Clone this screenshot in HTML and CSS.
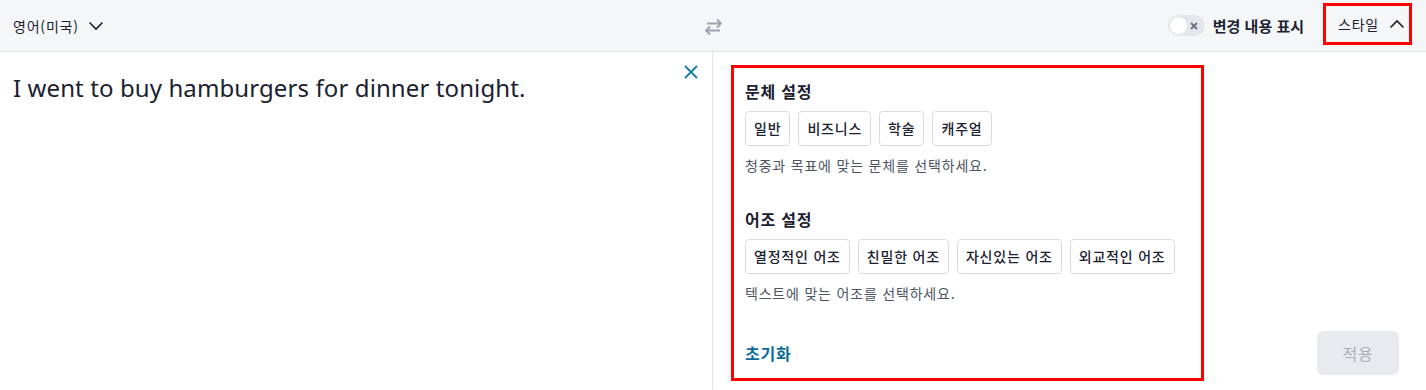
FILE: index.html
```html
<!DOCTYPE html>
<html lang="ko">
<head>
  <meta charset="UTF-8">
  <meta name="viewport" content="width=device-width, initial-scale=1.0">
  <title>글쓰기 스타일</title>
  <link rel="stylesheet" href="styles.css">
</head>
<body>
  <div class="app">
    <header class="toolbar">
      <div class="toolbar-left">
        <button class="lang-select">
          <span>영어(미국)</span>
          <svg width="16" height="16" viewBox="0 0 16 16"><polyline points="1.5,4.5 8,11 14.5,4.5" fill="none" stroke="currentColor" stroke-width="1.6"/></svg>
        </button>
      </div>
      <button class="swap" aria-label="swap">
        <svg width="19" height="17" viewBox="0 0 19 17">
          <path d="M3 5.5H17M13 1.5L17 5.5L13 9.5" fill="none" stroke="currentColor" stroke-width="1.8"/>
          <path d="M16 12.5H2M6 8.5L2 12.5L6 16.5" fill="none" stroke="currentColor" stroke-width="1.8"/>
        </svg>
      </button>
      <div class="toolbar-right">
        <label class="toggle">
          <span class="switch">
            <span class="knob"></span>
            <svg width="8" height="8" viewBox="0 0 8 8"><path d="M1 1L7 7M7 1L1 7" stroke="currentColor" stroke-width="1.8"/></svg>
          </span>
          <span class="toggle-label">변경 내용 표시</span>
        </label>
        <button class="style-btn">
          <span>스타일</span>
          <svg width="16" height="16" viewBox="0 0 16 16"><polyline points="1.5,11.5 8,5 14.5,11.5" fill="none" stroke="currentColor" stroke-width="1.6"/></svg>
        </button>
      </div>
    </header>

    <main class="panes">
      <section class="source">
        <p class="source-text">I went to buy hamburgers for dinner tonight.</p>
        <button class="clear" aria-label="clear">
          <svg width="14" height="14" viewBox="0 0 14 14"><path d="M1 1L13 13M13 1L1 13" stroke="currentColor" stroke-width="1.9"/></svg>
        </button>
      </section>

      <section class="style-pane">
        <div class="style-panel">
          <h3>문체 설정</h3>
          <div class="chips">
            <button class="chip">일반</button>
            <button class="chip">비즈니스</button>
            <button class="chip">학술</button>
            <button class="chip">캐주얼</button>
          </div>
          <p class="hint">청중과 목표에 맞는 문체를 선택하세요.</p>

          <h3 class="second">어조 설정</h3>
          <div class="chips">
            <button class="chip">열정적인 어조</button>
            <button class="chip">친밀한 어조</button>
            <button class="chip">자신있는 어조</button>
            <button class="chip">외교적인 어조</button>
          </div>
          <p class="hint">텍스트에 맞는 어조를 선택하세요.</p>

          <button class="reset">초기화</button>
        </div>
        <button class="apply" disabled>적용</button>
      </section>
    </main>
  </div>
</body>
</html>
```

FILE: styles.css
```css
:root {
  --text: #1b2130;
  --muted: #4d5562;
  --line: #e1e4e8;
  --chip-border: #d8dce2;
  --link: #0b6c9c;
  --annot: #ff0000;
  --ko-track: 0.8px;
}

* {
  box-sizing: border-box;
}

body {
  margin: 0;
  font-family: "Noto Sans", "Noto Sans CJK KR", sans-serif;
  color: var(--text);
  background: #ffffff;
}

button {
  font-family: inherit;
  color: inherit;
  background: none;
  border: none;
  padding: 0;
  cursor: pointer;
  white-space: nowrap;
}

.app {
  height: 390px;
  display: flex;
  flex-direction: column;
  overflow: hidden;
}

/* Toolbar */
.toolbar {
  height: 52px;
  flex-shrink: 0;
  display: grid;
  grid-template-columns: 1fr auto 1fr;
  align-items: center;
  background: #f5f6f8;
  border-bottom: 1px solid var(--line);
}

.toolbar-left {
  padding-left: 13px;
}

.lang-select {
  display: flex;
  align-items: center;
  gap: 9px;
  font-family: "Noto Sans CJK KR", sans-serif;
  font-size: 14px;
  line-height: 20px;
  letter-spacing: var(--ko-track);
  color: var(--text);
}

.swap {
  display: flex;
  color: #9ca3af;
  margin-top: 1px;
}

.toolbar-right {
  display: flex;
  align-items: center;
  justify-content: flex-end;
  padding-right: 14px;
}

.toggle {
  display: flex;
  align-items: center;
  gap: 8px;
  margin-right: 19px;
}

.switch {
  width: 37px;
  height: 21px;
  border-radius: 11px;
  background: #e3e6ea;
  display: flex;
  align-items: center;
  justify-content: space-between;
  padding: 0 7px 0 2px;
  color: #6b7280;
}

.knob {
  width: 17px;
  height: 17px;
  border-radius: 50%;
  background: #ffffff;
}

.toggle-label {
  font-family: "Noto Sans CJK KR", sans-serif;
  font-size: 15px;
  font-weight: 700;
  line-height: 20px;
}

.style-btn {
  display: flex;
  align-items: center;
  gap: 10px;
  height: 42px;
  width: 89px;
  margin-bottom: 3px;
  padding: 0 2px 0 12px;
  border: 3px solid var(--annot);
  font-family: "Noto Sans CJK KR", sans-serif;
  font-size: 14px;
  line-height: 20px;
  letter-spacing: var(--ko-track);
}

.style-btn svg {
  flex-shrink: 0;
}

/* Panes */
.panes {
  flex: 1;
  display: flex;
  min-height: 0;
}

.source {
  width: 713px;
  flex-shrink: 0;
  display: flex;
  align-items: flex-start;
  justify-content: space-between;
  padding: 13px 14px 0 13px;
  border-right: 1px solid var(--line);
}

.source-text {
  margin: 7px 0 0;
  font-size: 24px;
  line-height: 32px;
  letter-spacing: 0.1px;
  color: var(--text);
}

.clear {
  display: flex;
  color: #1680aa;
}

.style-pane {
  flex: 1;
  display: flex;
  align-items: flex-end;
  padding: 13px 27px 9px 18px;
}

.style-panel {
  width: 473px;
  align-self: stretch;
  display: flex;
  flex-direction: column;
  align-items: flex-start;
  border: 3px solid var(--annot);
  padding: 11px 11px 13px;
  font-family: "Noto Sans CJK KR", sans-serif;
  letter-spacing: var(--ko-track);
}

.style-panel h3 {
  margin: 0;
  font-size: 16px;
  font-weight: 700;
  line-height: 24px;
}

.style-panel h3.second {
  margin-top: 32px;
}

.chips {
  display: flex;
  gap: 8px;
  margin-top: 8px;
}

.chip {
  height: 35px;
  padding: 0 8px;
  border: 1px solid var(--chip-border);
  border-radius: 4px;
  background: #ffffff;
  font-size: 14px;
  font-weight: 500;
  line-height: 33px;
  letter-spacing: var(--ko-track);
  color: var(--text);
}

.hint {
  margin: 9px 0 0;
  font-size: 14px;
  line-height: 20px;
  color: var(--muted);
}

.reset {
  margin-top: auto;
  font-size: 16px;
  font-weight: 700;
  line-height: 24px;
  letter-spacing: var(--ko-track);
  color: var(--link);
}

.apply {
  margin-left: auto;
  margin-bottom: 6px;
  width: 82px;
  height: 44px;
  border-radius: 6px;
  background: #e8eaee;
  color: #a9aeb6;
  font-family: "Noto Sans CJK KR", sans-serif;
  font-size: 16px;
  letter-spacing: var(--ko-track);
  cursor: default;
}
```
